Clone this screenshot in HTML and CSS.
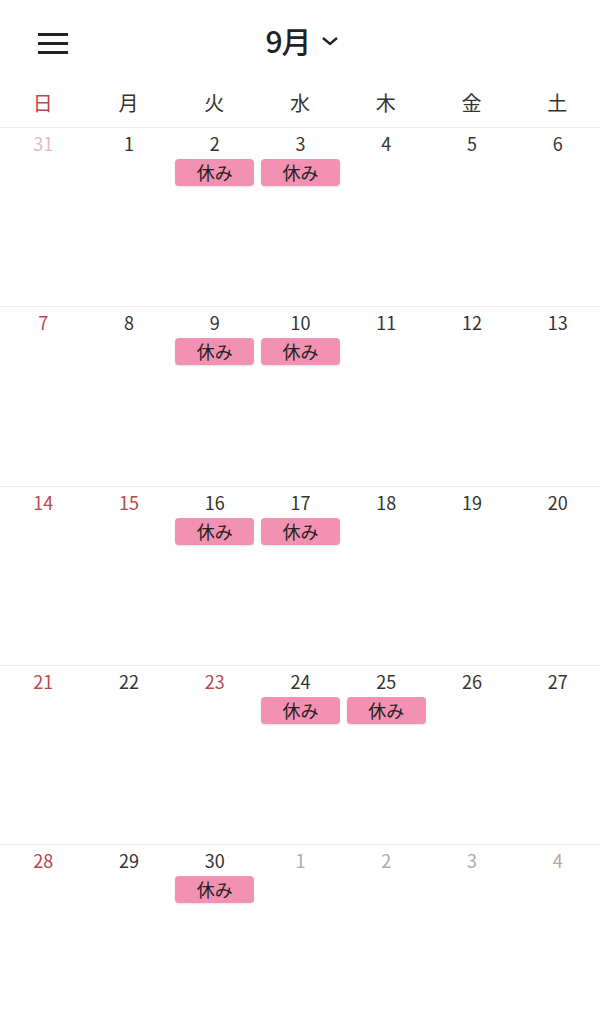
FILE: index.html
```html
<!DOCTYPE html>
<html lang="ja">
<head>
<meta charset="utf-8">
<link rel="stylesheet" href="styles.css">
</head>
<body>
<div class="app">
  <header class="header">
    <button class="menu" aria-label="menu">
      <svg width="32" height="22" viewBox="0 0 32 22"><rect x="1" y="1" width="30" height="3" fill="#222"/><rect x="1" y="10" width="30" height="3" fill="#222"/><rect x="1" y="19" width="30" height="3" fill="#222"/></svg>
    </button>
    <div class="title">9月<svg class="chev" width="18" height="12" viewBox="0 0 18 12"><path d="M2 3 L9 9 L16 3" fill="none" stroke="#222" stroke-width="2.4"/></svg></div>
  </header>
  <div class="weekdays">
    <div class="wd sun">日</div><div class="wd">月</div><div class="wd">火</div><div class="wd">水</div><div class="wd">木</div><div class="wd">金</div><div class="wd">土</div>
  </div>
  <div class="grid">
    <div class="week">
      <div class="day"><span class="num prev">31</span></div>
      <div class="day"><span class="num">1</span></div>
      <div class="day"><span class="num">2</span><span class="ev">休み</span></div>
      <div class="day"><span class="num">3</span><span class="ev">休み</span></div>
      <div class="day"><span class="num">4</span></div>
      <div class="day"><span class="num">5</span></div>
      <div class="day"><span class="num">6</span></div>
    </div>
    <div class="week">
      <div class="day"><span class="num red">7</span></div>
      <div class="day"><span class="num">8</span></div>
      <div class="day"><span class="num">9</span><span class="ev">休み</span></div>
      <div class="day"><span class="num">10</span><span class="ev">休み</span></div>
      <div class="day"><span class="num">11</span></div>
      <div class="day"><span class="num">12</span></div>
      <div class="day"><span class="num">13</span></div>
    </div>
    <div class="week">
      <div class="day"><span class="num red">14</span></div>
      <div class="day"><span class="num red">15</span></div>
      <div class="day"><span class="num">16</span><span class="ev">休み</span></div>
      <div class="day"><span class="num">17</span><span class="ev">休み</span></div>
      <div class="day"><span class="num">18</span></div>
      <div class="day"><span class="num">19</span></div>
      <div class="day"><span class="num">20</span></div>
    </div>
    <div class="week">
      <div class="day"><span class="num red">21</span></div>
      <div class="day"><span class="num">22</span></div>
      <div class="day"><span class="num red">23</span></div>
      <div class="day"><span class="num">24</span><span class="ev">休み</span></div>
      <div class="day"><span class="num">25</span><span class="ev">休み</span></div>
      <div class="day"><span class="num">26</span></div>
      <div class="day"><span class="num">27</span></div>
    </div>
    <div class="week">
      <div class="day"><span class="num red">28</span></div>
      <div class="day"><span class="num">29</span></div>
      <div class="day"><span class="num">30</span><span class="ev">休み</span></div>
      <div class="day"><span class="num next">1</span></div>
      <div class="day"><span class="num next">2</span></div>
      <div class="day"><span class="num next">3</span></div>
      <div class="day"><span class="num next">4</span></div>
    </div>
  </div>
</div>
</body>
</html>
```
FILE: styles.css
```css
* { box-sizing: border-box; }
html, body { margin: 0; padding: 0; background: #fff; }
body {
  font-family: "Noto Sans CJK JP", "Noto Sans", sans-serif;
  color: #333;
  width: 600px;
  height: 1018px;
  overflow: hidden;
}
.header {
  position: relative;
  height: 86px;
  display: flex;
  align-items: center;
  justify-content: center;
}
.menu {
  position: absolute;
  left: 37px;
  top: 32px;
  border: 0;
  background: none;
  padding: 0;
  line-height: 0;
}
.title {
  display: flex;
  align-items: center;
  font-size: 30px;
  font-weight: 500;
  color: #222;
  margin-top: -6px;
  margin-left: 4px;
  letter-spacing: -1px;
}
.chev { margin-left: 10px; margin-top: 2px; }
.weekdays {
  display: grid;
  grid-template-columns: repeat(7, 1fr);
  height: 42px;
  border-bottom: 1px solid #ececec;
}
.wd {
  text-align: center;
  font-size: 20px;
  line-height: 34px;
  color: #333;
}
.wd.sun { color: #b8474f; }
.week {
  display: grid;
  grid-template-columns: repeat(7, 1fr);
  height: 179.3px;
  border-bottom: 1px solid #ececec;
}
.day {
  display: flex;
  flex-direction: column;
  align-items: stretch;
  padding: 2px 3px 0 4px;
}
.num {
  text-align: center;
  font-size: 18px;
  line-height: 26px;
  color: #333;
}
.num.red { color: #b8474f; }
.num.prev { color: #e3b8bd; }
.num.next { color: #aaa; }
.ev {
  margin-top: 3px;
  height: 27px;
  background: #f391b2;
  border-radius: 4px;
  text-align: center;
  font-size: 18px;
  line-height: 26px;
  color: #222;
  box-shadow: 0 1px 2px rgba(0,0,0,0.12);
}
```
